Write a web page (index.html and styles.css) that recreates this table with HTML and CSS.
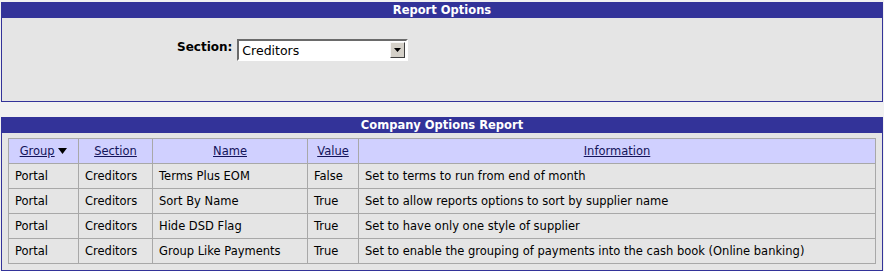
FILE: index.html
```html
<!DOCTYPE html>
<html>
<head>
<meta charset="utf-8">
<title>Company Options Report</title>
<link rel="stylesheet" href="styles.css">
</head>
<body>
<div class="panel options">
  <div class="panel-title">Report Options</div>
  <div class="panel-body">
    <div class="field">
      <label class="field-label" for="section">Section:</label>
      <div class="select">
        <span class="select-value">Creditors</span>
        <span class="select-btn"><svg width="7" height="4" viewBox="0 0 7 4"><path d="M0 0h7L3.5 4z" fill="#000"/></svg></span>
      </div>
    </div>
  </div>
</div>

<div class="panel report">
  <div class="panel-title">Company Options Report</div>
  <div class="panel-body">
    <table class="grid">
      <thead>
        <tr>
          <th class="c-group"><a href="#">Group</a> <svg class="sort" width="9" height="6" viewBox="0 0 9 6"><path d="M0 0h9L4.5 6z" fill="#000"/></svg></th>
          <th class="c-section"><a href="#">Section</a></th>
          <th class="c-name"><a href="#">Name</a></th>
          <th class="c-value"><a href="#">Value</a></th>
          <th class="c-info"><a href="#">Information</a></th>
        </tr>
      </thead>
      <tbody>
        <tr><td>Portal</td><td>Creditors</td><td>Terms Plus EOM</td><td>False</td><td>Set to terms to run from end of month</td></tr>
        <tr><td>Portal</td><td>Creditors</td><td>Sort By Name</td><td>True</td><td>Set to allow reports options to sort by supplier name</td></tr>
        <tr><td>Portal</td><td>Creditors</td><td>Hide DSD Flag</td><td>True</td><td>Set to have only one style of supplier</td></tr>
        <tr><td>Portal</td><td>Creditors</td><td>Group Like Payments</td><td>True</td><td>Set to enable the grouping of payments into the cash book (Online banking)</td></tr>
      </tbody>
    </table>
  </div>
</div>
</body>
</html>
```
FILE: styles.css
```css
html, body {
  margin: 0;
  background: #f1f1f1;
}
body {
  padding: 2px 1px 0 1px;
  font-family: "DejaVu Sans", Verdana, sans-serif;
  font-size: 11.5px;
  color: #000;
}

.panel {
  border: 1px solid #333399;
  border-top: 0;
  background: #e5e5e5;
}
.panel-title {
  background: #333399;
  color: #fff;
  font-weight: bold;
  text-align: center;
  height: 16px;
  line-height: 16px;
  font-size: 11.5px;
}

.options .panel-body {
  height: 83px;
  box-sizing: border-box;
  padding-top: 21px;
}
.field {
  display: flex;
  align-items: flex-start;
  margin-left: 175px;
  gap: 5px;
}
.field-label {
  font-weight: bold;
  font-size: 12px;
  padding-top: 1px;
}
.select {
  width: 171px;
  height: 22px;
  box-sizing: border-box;
  border: 2px solid;
  border-color: #6a6a6a #fff #fff #6a6a6a;
  background: #fff;
  display: flex;
  align-items: center;
  justify-content: space-between;
  font-size: 12.5px;
}
.select-value {
  padding-left: 3px;
}
.select-btn {
  width: 15px;
  height: 16px;
  margin-right: 1px;
  box-sizing: border-box;
  border: 1px solid;
  border-color: #f5f5f5 #404040 #404040 #f5f5f5;
  background: #d4d0c8;
  display: flex;
  align-items: center;
  justify-content: center;
}

.report {
  margin-top: 15px;
}
.report .panel-body {
  padding: 5px 6px 6px 6px;
}
.grid {
  width: 100%;
  border-collapse: collapse;
  border: 1px solid #a0a0a0;
}
.grid th, .grid td {
  border: 1px solid #a8a8a8;
  height: 24px;
  padding: 0 6px;
  white-space: nowrap;
}
.grid th {
  background: #d0d0ff;
  font-weight: normal;
  text-align: center;
}
.grid th a {
  color: #14145a;
  text-decoration: underline;
}
.grid td {
  background: #e5e5e5;
  text-align: left;
}
.sort {
  vertical-align: 1px;
}
.c-group { width: 57px; }
.c-section { width: 61px; }
.c-name { width: 142px; }
.c-value { width: 38px; }
```
